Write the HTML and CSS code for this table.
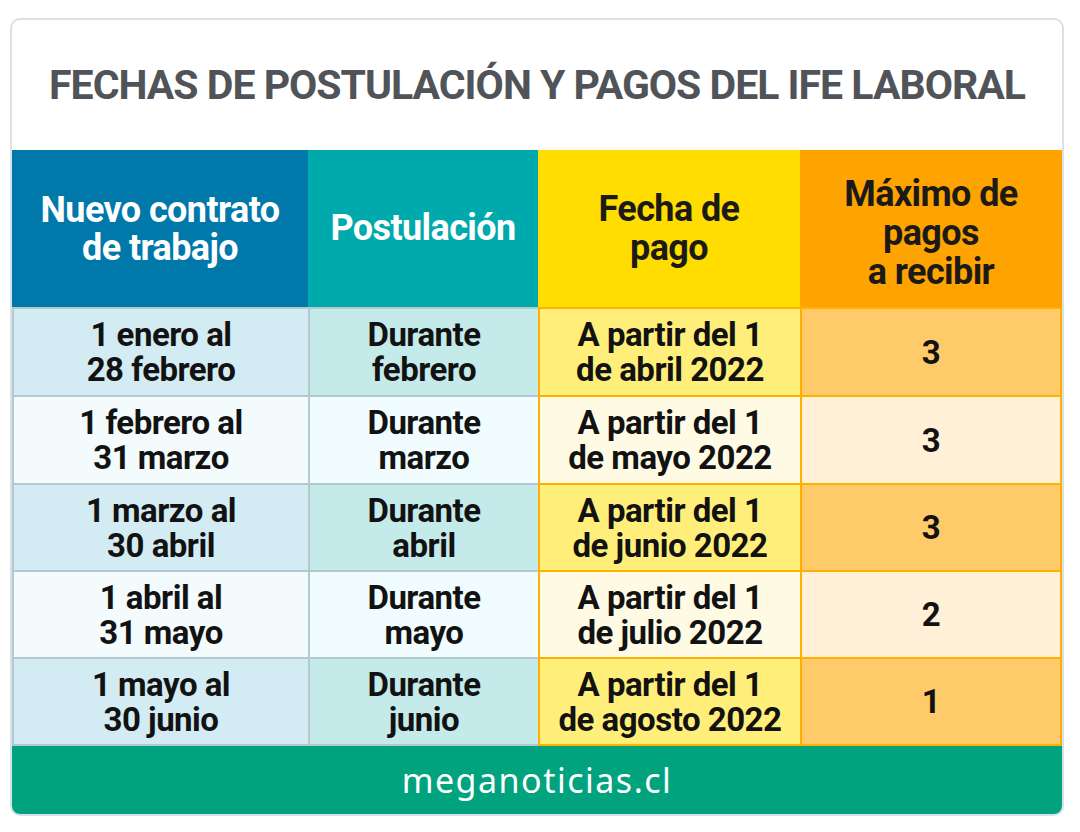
FILE: index.html
```html
<!DOCTYPE html>
<html lang="es">
<head>
<meta charset="utf-8">
<title>Fechas de postulación y pagos del IFE Laboral</title>
<link rel="stylesheet" href="styles.css">
</head>
<body>
<div class="card">
  <div class="title">FECHAS DE POSTULACIÓN Y PAGOS DEL IFE LABORAL</div>
  <div class="grid">
    <div class="th c1">Nuevo contrato<br>de trabajo</div>
    <div class="th c2">Postulación</div>
    <div class="th c3">Fecha de<br>pago</div>
    <div class="th c4">Máximo de<br>pagos<br>a recibir</div>

    <div class="td c1 odd">1 enero al<br>28 febrero</div>
    <div class="td c2 odd">Durante<br>febrero</div>
    <div class="td c3 odd">A partir del 1<br>de abril 2022</div>
    <div class="td c4 odd">3</div>

    <div class="td c1 even">1 febrero al<br>31 marzo</div>
    <div class="td c2 even">Durante<br>marzo</div>
    <div class="td c3 even">A partir del 1<br>de mayo 2022</div>
    <div class="td c4 even">3</div>

    <div class="td c1 odd">1 marzo al<br>30 abril</div>
    <div class="td c2 odd">Durante<br>abril</div>
    <div class="td c3 odd">A partir del 1<br>de junio 2022</div>
    <div class="td c4 odd">3</div>

    <div class="td c1 even">1 abril al<br>31 mayo</div>
    <div class="td c2 even">Durante<br>mayo</div>
    <div class="td c3 even">A partir del 1<br>de julio 2022</div>
    <div class="td c4 even">2</div>

    <div class="td c1 odd last">1 mayo al<br>30 junio</div>
    <div class="td c2 odd last">Durante<br>junio</div>
    <div class="td c3 odd last">A partir del 1<br>de agosto 2022</div>
    <div class="td c4 odd last">1</div>
  </div>
  <div class="footer">meganoticias.cl</div>
</div>
</body>
</html>
```
FILE: styles.css
```css
html, body {
  margin: 0;
  padding: 0;
  background: #ffffff;
}

body {
  font-family: Roboto, "Liberation Sans", sans-serif;
  font-weight: bold;
}

.card {
  margin: 18px 0 0 10px;
  width: 1050px;
  border: 2px solid #d9e1e8;
  border-radius: 10px;
  overflow: hidden;
  background: #ffffff;
}

.title {
  height: 130px;
  display: flex;
  align-items: center;
  justify-content: center;
  font-size: 41px;
  letter-spacing: -1px;
  line-height: 1;
  color: #505459;
  white-space: nowrap;
}

.grid {
  display: grid;
  grid-template-columns: 296px 230px 262px 262px;
  grid-template-rows: 157px 88px 88px 87px 87px 89px;
}

.th, .td {
  box-sizing: border-box;
  display: flex;
  align-items: center;
  justify-content: center;
  text-align: center;
  white-space: nowrap;
}

.th {
  font-size: 36px;
  letter-spacing: -0.6px;
  line-height: 39px;
}

.th.c1 { background: #0078aa; color: #ffffff; line-height: 38px; }
.th.c2 { background: #00a9ab; color: #ffffff; }
.th.c3 { background: #ffdd00; color: #1c1a17; }
.th.c4 { background: #ffa300; color: #1c1a17; padding-top: 10px; }

.td {
  font-size: 33px;
  letter-spacing: -0.5px;
  line-height: 35px;
  color: #121212;
  border-top: 2px solid #b4c8d0;
}

.td.last { border-bottom: 2px solid #b4c8d0; }

.td.c1 { border-left: 2px solid #b4c8d0; }
.td.c2 { border-left: 2px solid #b4c8d0; }
.td.c3 { border-left: 2px solid #ffb000; border-top-color: #ffb000; border-bottom-color: #ffb000; }
.td.c4 { border-left: 2px solid #ffb000; border-right: 2px solid #ffb000; border-top-color: #ffb000; border-bottom-color: #ffb000; }

.td.c1.odd { background: #d3ebf2; }
.td.c1.even { background: #f3fbfd; }
.td.c2.odd { background: #c4eaea; }
.td.c2.even { background: #f0fcfd; }
.td.c3.odd { background: #ffef7a; }
.td.c3.even { background: #fffae4; }
.td.c4.odd { background: #ffca6a; }
.td.c4.even { background: #fff0d7; }

.footer {
  height: 68px;
  background: #00a37e;
  color: #ffffff;
  display: flex;
  align-items: center;
  justify-content: center;
  font-family: "Noto Sans", "Open Sans", sans-serif;
  font-weight: normal;
  font-size: 34px;
  letter-spacing: 1.5px;
}
```
